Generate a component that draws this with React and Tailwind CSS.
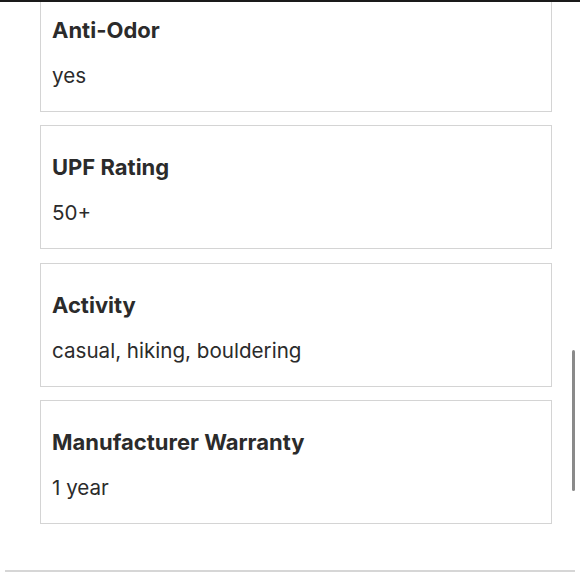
import React from "react";

const specs = [
  { label: "Anti-Odor", value: "yes" },
  { label: "UPF Rating", value: "50+" },
  { label: "Activity", value: "casual, hiking, bouldering" },
  { label: "Manufacturer Warranty", value: "1 year" },
];

const SpecCard = ({ label, value }) => (
  <div className="border border-[#d4d4d4] bg-white px-[11px] pt-[27px] pb-[21px]">
    <h3 className="text-[22px] leading-[28px] font-bold text-[#2b2b2b]">
      {label}
    </h3>
    <p className="mt-[18px] text-[20.6px] leading-[28px] text-[#2b2b2b]">
      {value}
    </p>
  </div>
);

export default function App() {
  return (
    <div
      className="relative h-[580px] w-[580px] overflow-hidden bg-white"
      style={{ fontFamily: "Inter, Roboto, sans-serif" }}
    >
      <div className="absolute left-0 right-0 top-0 z-10 h-[2px] bg-[#1a1a1a]" />
      <div className="-mt-[12px] ml-[40px] flex w-[512px] flex-col gap-[13.33px]">
        {specs.map((s) => (
          <SpecCard key={s.label} label={s.label} value={s.value} />
        ))}
      </div>
      <div className="mx-[5px] mt-[46px] h-[2px] bg-[#d6d6d6]" />
      <div className="absolute right-[5px] top-[350px] h-[141px] w-[3px] rounded-full bg-[#8a8a8a]" />
    </div>
  );
}
